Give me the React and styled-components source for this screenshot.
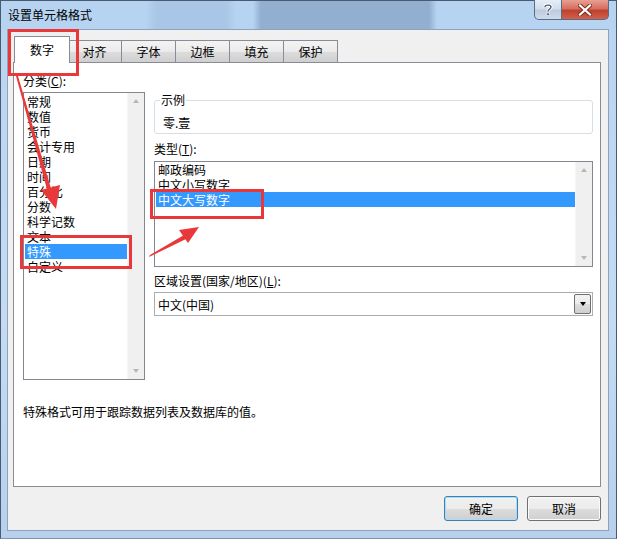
import React from 'react';
import styled, { createGlobalStyle, css } from 'styled-components';

const GlobalStyle = createGlobalStyle`
  html, body {
    margin: 0;
    padding: 0;
    background: #ffffff;
  }
  * {
    box-sizing: border-box;
  }
`;

const FONT = `"Microsoft YaHei", "Noto Sans CJK SC", "Noto Sans", sans-serif`;

const Window = styled.div`
  position: relative;
  width: 617px;
  height: 539px;
  display: flex;
  flex-direction: column;
  border: 1px solid #4a5a70;
  border-bottom-color: #7f93ad;
  background: linear-gradient(to bottom, #b9d4f1 0%, #c4dbf3 60%, #b7d0ec 100%);
  font-family: ${FONT};
  font-size: 12px;
  color: #000;
`;

const TitleBar = styled.div`
  height: 28px;
  display: flex;
  align-items: flex-start;
  background: linear-gradient(
    to right,
    #b6d3f2 0px,
    #b6d3f2 145px,
    #a9c6e6 155px,
    #a9c6e6 225px,
    #b6d3f2 235px,
    #b6d3f2 252px,
    #93afd0 260px,
    #93afd0 428px,
    #b6d3f2 436px
  );
`;

const Title = styled.div`
  padding: 6px 0 0 7px;
  line-height: 16px;
  font-size: 12px;
  color: #000;
  flex: 1;
`;

const CaptionButtons = styled.div`
  display: flex;
  margin-right: 7px;
  margin-top: -1px;
`;

const CaptionButton = styled.div`
  height: 20px;
  display: flex;
  align-items: center;
  justify-content: center;
  border: 1px solid #5b6b82;
  border-top: none;
  ${(p) =>
    p.$close
      ? css`
          width: 47px;
          border-left: none;
          border-radius: 0 0 5px 0;
          background: linear-gradient(to bottom, #e8a093 0%, #d5705f 45%, #c0412e 55%, #d2604c 100%);
        `
      : css`
          width: 28px;
          border-radius: 0 0 0 5px;
          background: linear-gradient(to bottom, #e6eef8 0%, #d2deec 45%, #bccbde 55%, #cfdcec 100%);
        `}
`;

const Client = styled.div`
  flex: 1;
  margin: 0 7px 7px 6px;
  border: 1px solid #8da2bd;
  background: #f0f0f0;
  display: flex;
  flex-direction: column;
`;

const TabStrip = styled.div`
  display: flex;
  align-items: flex-end;
  height: 32px;
  padding-left: 7px;
`;

const Tab = styled.div`
  margin-left: -1px;
  display: flex;
  align-items: center;
  justify-content: center;
  border: 1px solid #898c95;
  border-bottom: none;
  ${(p) =>
    p.$active
      ? css`
          width: 56px;
          height: 27px;
          margin-right: -2px;
          margin-bottom: -1px;
          background: #ffffff;
          position: relative;
          z-index: 1;
          padding-bottom: 2px;
        `
      : css`
          width: 55px;
          height: 22px;
          background: linear-gradient(to bottom, #f3f3f3 0%, #ebebeb 50%, #dddddd 50%, #cfcfcf 100%);
        `}
`;

const Panel = styled.div`
  height: 425px;
  margin: 0 7px 0 5px;
  border: 1px solid #898c95;
  background: #ffffff;
  padding: 10px 7px 0 9px;
  display: flex;
  flex-direction: column;
`;

const TopRow = styled.div`
  display: flex;
  gap: 9px;
`;

const LeftCol = styled.div`
  width: 122px;
  display: flex;
  flex-direction: column;
`;

const RightCol = styled.div`
  flex: 1;
  margin-top: 19px;
  display: flex;
  flex-direction: column;
`;

const Label = styled.div`
  line-height: 16px;
  margin-top: ${(p) => p.$mt || 0}px;
  white-space: nowrap;
`;

const ListBox = styled.div`
  height: ${(p) => p.$h}px;
  margin-top: ${(p) => p.$mt || 0}px;
  border: 1px solid #828790;
  display: flex;
  background: #fff;
`;

const Items = styled.div`
  flex: 1;
  padding: ${(p) => p.$pt || 0}px 0 0 1px;
`;

const Item = styled.div`
  height: 15px;
  line-height: 15px;
  padding-left: 2px;
  white-space: nowrap;
  ${(p) =>
    p.$selected &&
    css`
      background: #3399ff;
      color: #ffffff;
    `}
`;

const ScrollBar = styled.div`
  width: 17px;
  background: #f0f0f0;
  border-left: 1px solid #f5f5f5;
  display: flex;
  flex-direction: column;
  justify-content: space-between;
  align-items: center;
  padding: 6px 0;
`;

const Arrow = styled.div`
  width: 0;
  height: 0;
  border-left: 3.5px solid transparent;
  border-right: 3.5px solid transparent;
  ${(p) =>
    p.$down
      ? css`border-top: 4px solid ${p.$color || '#b8b8b8'};`
      : css`border-bottom: 4px solid ${p.$color || '#b8b8b8'};`}
`;

const GroupBox = styled.fieldset`
  margin: 0;
  padding: 7px 7px 2px 8px;
  border: 1px solid #d5dfe5;
  border-radius: 3px;
  min-width: 0;
`;

const Legend = styled.legend`
  padding: 0 1px;
  margin-left: -3px;
  line-height: 16px;
`;

const SampleText = styled.div`
  line-height: 16px;
`;

const Combo = styled.div`
  height: 24px;
  margin-top: 3px;
  border: 1px solid #abadb3;
  display: flex;
  align-items: center;
  background: #fff;
  padding: 1px;
`;

const ComboText = styled.div`
  flex: 1;
  padding-left: 2px;
`;

const DropButton = styled.div`
  width: 17px;
  height: 100%;
  border: 1px solid #707070;
  border-radius: 2px;
  background: linear-gradient(to bottom, #f2f2f2 0%, #ebebeb 50%, #dddddd 50%, #cfcfcf 100%);
  display: flex;
  align-items: center;
  justify-content: center;
`;

const Description = styled.div`
  margin-top: 24px;
  line-height: 16px;
`;

const Footer = styled.div`
  display: flex;
  justify-content: flex-end;
  gap: 9px;
  padding: 9px 7px 0 0;
`;

const Button = styled.div`
  width: 74px;
  height: 25px;
  display: flex;
  align-items: center;
  justify-content: center;
  border-radius: 3px;
  background: linear-gradient(to bottom, #f2f2f2 0%, #ebebeb 50%, #dddddd 50%, #cfcfcf 100%);
  ${(p) =>
    p.$default
      ? css`
          border: 1px solid #3c7fb1;
          box-shadow: inset 0 0 0 1px #a9dcf6;
        `
      : css`
          border: 1px solid #707070;
          box-shadow: inset 0 0 0 1px #fbfbfb;
        `}
`;

const Overlay = styled.svg`
  position: absolute;
  left: -1px;
  top: -1px;
  pointer-events: none;
`;

const tabs = ['数字', '对齐', '字体', '边框', '填充', '保护'];
const categories = ['常规', '数值', '货币', '会计专用', '日期', '时间', '百分比', '分数', '科学记数', '文本', '特殊', '自定义'];
const types = ['邮政编码', '中文小写数字', '中文大写数字'];

const Annotations = () => {
  const red = '#e8383a';
  return (
    <Overlay width="617" height="539" viewBox="0 0 617 539">
      <g fill="none" stroke={red} strokeWidth="3">
        <rect x="9.5" y="30.5" width="68" height="44" />
        <rect x="21.5" y="236.5" width="109" height="31" />
        <rect x="151.5" y="190.5" width="111" height="27" />
      </g>
      <g fill={red}>
        <polygon points="16,76 18,76 52,192 48,193" />
        <polygon points="41,190 60,185 56,209" />
        <polygon points="149,257 150,255 184,235 186,239" />
        <polygon points="179,230 199,227 188,243" />
      </g>
    </Overlay>
  );
};

const App = () => {
  return (
    <>
      <GlobalStyle />
      <Window>
        <TitleBar>
          <Title>设置单元格格式</Title>
          <CaptionButtons>
            <CaptionButton>
              <svg width="10" height="13" viewBox="0 0 10 13">
                <path
                  d="M2 4 C2 1.5 8 1.5 8 4 C8 6 5 6 5 8.5"
                  fill="none"
                  stroke="#fff"
                  strokeWidth="3.2"
                />
                <path
                  d="M2 4 C2 1.5 8 1.5 8 4 C8 6 5 6 5 8.5"
                  fill="none"
                  stroke="#4d5d74"
                  strokeWidth="1.4"
                />
                <rect x="3.8" y="10" width="2.4" height="2.4" fill="#4d5d74" stroke="#fff" strokeWidth="0.6" />
              </svg>
            </CaptionButton>
            <CaptionButton $close>
              <svg width="14" height="12" viewBox="0 0 14 12">
                <path d="M2 1.5 L12 10.5 M12 1.5 L2 10.5" stroke="#7a2a20" strokeWidth="4" strokeLinecap="square" />
                <path d="M2 1.5 L12 10.5 M12 1.5 L2 10.5" stroke="#ffffff" strokeWidth="2.2" strokeLinecap="square" />
              </svg>
            </CaptionButton>
          </CaptionButtons>
        </TitleBar>
        <Client>
          <TabStrip>
            {tabs.map((t, i) => (
              <Tab key={t} $active={i === 0}>
                {t}
              </Tab>
            ))}
          </TabStrip>
          <Panel>
            <TopRow>
              <LeftCol>
                <Label>分类(<u>C</u>):</Label>
                <ListBox $h={288} $mt={3}>
                  <Items $pt={1}>
                    {categories.map((c) => (
                      <Item key={c} $selected={c === '特殊'}>
                        {c}
                      </Item>
                    ))}
                  </Items>
                  <ScrollBar>
                    <Arrow />
                    <Arrow $down />
                  </ScrollBar>
                </ListBox>
              </LeftCol>
              <RightCol>
                <GroupBox>
                  <Legend>示例</Legend>
                  <SampleText>零.壹</SampleText>
                </GroupBox>
                <Label $mt={7}>类型(<u>T</u>):</Label>
                <ListBox $h={106} $mt={4}>
                  <Items>
                    {types.map((t) => (
                      <Item key={t} $selected={t === '中文大写数字'}>
                        {t}
                      </Item>
                    ))}
                  </Items>
                  <ScrollBar>
                    <Arrow />
                    <Arrow $down />
                  </ScrollBar>
                </ListBox>
                <Label $mt={6}>区域设置(国家/地区)(<u>L</u>):</Label>
                <Combo>
                  <ComboText>中文(中国)</ComboText>
                  <DropButton>
                    <Arrow $down $color="#000" />
                  </DropButton>
                </Combo>
              </RightCol>
            </TopRow>
            <Description>特殊格式可用于跟踪数据列表及数据库的值。</Description>
          </Panel>
          <Footer>
            <Button $default>确定</Button>
            <Button>取消</Button>
          </Footer>
        </Client>
        <Annotations />
      </Window>
    </>
  );
};

export default App;
